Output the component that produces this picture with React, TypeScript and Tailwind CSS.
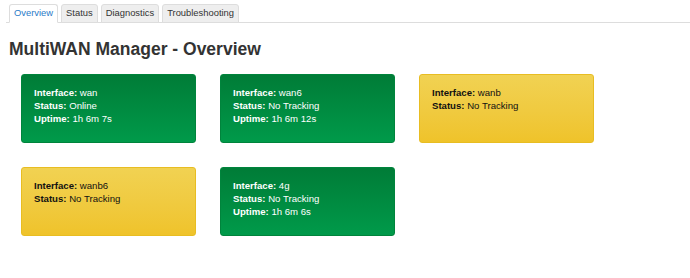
import React from "react";

type Iface = { name: string; status: string; uptime?: string; ok: boolean };

const rows: Iface[][] = [
  [
    { name: "wan", status: "Online", uptime: "1h 6m 7s", ok: true },
    { name: "wan6", status: "No Tracking", uptime: "1h 6m 12s", ok: true },
    { name: "wanb", status: "No Tracking", ok: false },
  ],
  [
    { name: "wanb6", status: "No Tracking", ok: false },
    { name: "4g", status: "No Tracking", uptime: "1h 6m 6s", ok: true },
  ],
];

const tabs = ["Overview", "Status", "Diagnostics", "Troubleshooting"];

function Card({ item }: { item: Iface }) {
  const cls = item.ok
    ? "bg-gradient-to-b from-[#007c37] to-[#009a4a] border-[#00843c] text-white"
    : "bg-gradient-to-b from-[#f1d252] to-[#efc32a] border-[#e8bd22] text-[#111]";
  return (
    <div className={`w-[175px] h-[69px] rounded-[3px] border pl-[12px] pt-[11px] text-[9.6px] leading-[13px] ${cls}`}>
      <div><b>Interface:</b> {item.name}</div>
      <div><b>Status:</b> {item.status}</div>
      {item.uptime && <div><b>Uptime:</b> {item.uptime}</div>}
    </div>
  );
}

export default function App() {
  return (
    <div className="min-h-[278px] bg-white font-['Liberation_Sans',Arial,sans-serif] text-[#333]">
      <div className="pt-[4px] pl-[6px]">
        <div className="flex gap-[3px] pl-[3px] border-b border-[#ddd]">
          {tabs.map((t, i) => (
            <div
              key={t}
              className={`h-[19px] px-[4px] -mb-px flex items-center rounded-t-[3px] border text-[9.4px] ${
                i === 0
                  ? "bg-white border-[#ddd] border-b-white text-[#2a7bc8]"
                  : "bg-[#eee] border-[#ddd] text-[#333]"
              }`}
            >
              {t}
            </div>
          ))}
        </div>
      </div>

      <h1 className="pl-[9px] mt-[15px] text-[17.5px] leading-[22px] font-bold text-[#333]">
        MultiWAN Manager - Overview
      </h1>

      <div className="pl-[21px] pt-[14px] flex flex-col gap-[24px]">
        {rows.map((r, i) => (
          <div key={i} className="flex gap-[24px]">
            {r.map((it) => (
              <Card key={it.name} item={it} />
            ))}
          </div>
        ))}
      </div>
    </div>
  );
}
